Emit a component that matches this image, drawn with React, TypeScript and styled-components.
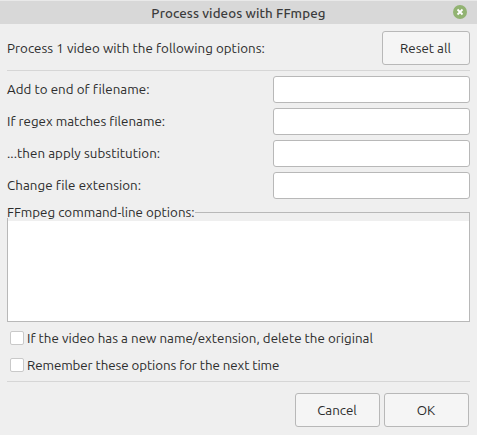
import React from "react";
import styled, { createGlobalStyle } from "styled-components";

const GlobalStyle = createGlobalStyle`
  * { box-sizing: border-box; }
  body { margin: 0; background: #efefef; overflow: hidden; }
`;

const Dialog = styled.main`
  width: 477px;
  height: 435px;
  display: flex;
  flex-direction: column;
  background: #efefef;
  color: #2c2c2c;
  font: 13.333px/18px Ubuntu, "Noto Sans", sans-serif;
`;

const TitleBar = styled.header`
  height: 24px;
  flex: none;
  display: grid;
  grid-template-columns: 34px 1fr 34px;
  align-items: center;
  background: #d8d8d8;
  border-top: 1px solid #e9e9e9;
`;

const Title = styled.h1`
  grid-column: 2;
  margin: 2px 0 0;
  text-align: center;
  font-size: 13.333px;
  font-weight: 500;
  line-height: 18px;
  letter-spacing: 0.1px;
  color: #3c3c3c;
`;

const CloseButton = styled.button`
  width: 14px;
  height: 14px;
  margin: 0 0 1px 10px;
  padding: 0;
  border: 0;
  background: none;
  display: block;
  svg { display: block; }
`;

const Content = styled.div`
  display: flex;
  flex-direction: column;
  padding: 7px 7px 0;
`;

const Summary = styled.div`
  height: 34px;
  margin-bottom: 5px;
  display: flex;
  align-items: center;
  justify-content: space-between;
`;

const Text = styled.span<{ $spacing?: number; $drop?: number }>`
  white-space: nowrap;
  letter-spacing: ${(p) => p.$spacing ?? 0}px;
  padding-top: ${(p) => p.$drop ?? 0}px;
`;

const Button = styled.button<{ $width: number }>`
  width: ${(p) => p.$width}px;
  height: 34px;
  padding: 2px 1px 0 0;
  border: 1px solid #b8b8b8;
  border-radius: 3px;
  background: #f5f5f5;
  color: inherit;
  font: inherit;
`;

const Separator = styled.hr`
  width: 100%;
  height: 1px;
  margin: 0;
  border: 0;
  background: #d6d6d6;
`;

const Fields = styled.div`
  display: grid;
  gap: 5px;
  margin: 5px 0 13px;
`;

const Field = styled.label`
  height: 27px;
  display: grid;
  grid-template-columns: 266px 197px;
  align-items: center;
`;

const Input = styled.input`
  width: 197px;
  height: 27px;
  border: 1px solid #b8b8b8;
  border-radius: 3px;
  background: #fff;
  font: inherit;
  outline: none;
`;

const OptionsFrame = styled.section`
  height: 110px;
  display: flex;
  flex-direction: column;
  border: 1px solid #b8b8b8;
`;

const FrameLabel = styled.label`
  width: 188px;
  height: 13px;
  margin: -8px 0 -5px -1px;
  background: #efefef;
  line-height: 16px;
  flex: none;
  position: relative;
`;

const TextArea = styled.textarea`
  width: 100%;
  height: 100px;
  margin-top: 8px;
  border: 0;
  padding: 2px;
  resize: none;
  background: #fff;
  font: inherit;
  outline: none;
`;

const Checks = styled.div`
  display: grid;
  gap: 9px;
  padding: 7px 0 7px 3px;
`;

const CheckRow = styled.label`
  height: 18px;
  display: flex;
  align-items: center;
  gap: 3px;
`;

const Checkbox = styled.input`
  appearance: none;
  width: 14px;
  height: 14px;
  margin: 0;
  border: 1px solid #c9c9c9;
  border-radius: 2px;
  background: #fff;
`;

const Actions = styled.footer`
  display: flex;
  justify-content: flex-end;
  gap: 4px;
  padding: 11px 1px 0 0;
`;

const fields = [
  { label: "Add to end of filename:", spacing: 0.05 },
  { label: "If regex matches filename:", spacing: 0 },
  { label: "...then apply substitution:", spacing: 0.06 },
  { label: "Change file extension:", spacing: 0.05 },
];

const checks = [
  { label: "If the video has a new name/extension, delete the original", spacing: 0.015 },
  { label: "Remember these options for the next time", spacing: -0.08 },
];

export default function App() {
  return (
    <>
      <GlobalStyle />
      <Dialog>
        <TitleBar>
          <Title>Process videos with FFmpeg</Title>
          <CloseButton aria-label="Close">
            <svg width="14" height="14" viewBox="0 0 14 14">
              <circle cx="7" cy="7" r="7" fill="#92b372" />
              <path d="M4.5 4.5l5 5m0-5l-5 5" stroke="#fff" strokeWidth="1.8" />
            </svg>
          </CloseButton>
        </TitleBar>
        <Content>
          <Summary>
            <Text $spacing={0.04} $drop={2}>Process 1 video with the following options:</Text>
            <Button $width={88}>Reset all</Button>
          </Summary>
          <Separator />
          <Fields>
            {fields.map((field) => (
              <Field key={field.label}>
                <Text $spacing={field.spacing}>{field.label}</Text>
                <Input />
              </Field>
            ))}
          </Fields>
          <OptionsFrame>
            <FrameLabel htmlFor="options">
              <Text>FFmpeg command-line options:</Text>
            </FrameLabel>
            <TextArea id="options" />
          </OptionsFrame>
          <Checks>
            {checks.map((check) => (
              <CheckRow key={check.label}>
                <Checkbox type="checkbox" />
                <Text $spacing={check.spacing} $drop={2}>{check.label}</Text>
              </CheckRow>
            ))}
          </Checks>
          <Separator />
          <Actions>
            <Button $width={85}>Cancel</Button>
            <Button $width={85}>OK</Button>
          </Actions>
        </Content>
      </Dialog>
    </>
  );
}
